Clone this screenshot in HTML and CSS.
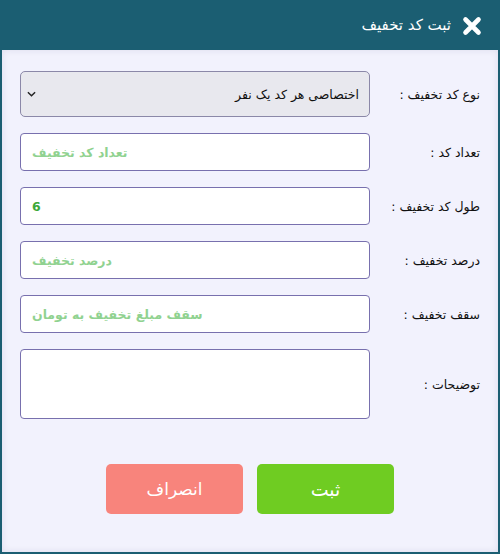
FILE: index.html
```html
<!DOCTYPE html>
<html lang="fa" dir="rtl">
<head>
<meta charset="utf-8">
<title>ثبت کد تخفیف</title>
<link rel="stylesheet" href="styles.css">
</head>
<body>
<div class="dialog">
  <header class="dialog-head">
    <svg class="close-icon" viewBox="0 0 20 20" width="20" height="20" aria-hidden="true">
      <path d="M3.5 3.5 L16.5 16.5 M16.5 3.5 L3.5 16.5" stroke="#fff" stroke-width="4.6" stroke-linecap="round" fill="none"/>
    </svg>
    <h1 class="dialog-title">ثبت کد تخفیف</h1>
  </header>
  <main class="dialog-body">
    <form class="form">
      <div class="row row-select">
        <label class="label">نوع کد تخفیف :</label>
        <div class="select-wrap">
          <select class="select">
            <option>اختصاصی هر کد یک نفر</option>
          </select>
          <svg class="chev" viewBox="0 0 10 6" width="9" height="6" aria-hidden="true">
            <path d="M1 1 L5 5 L9 1" stroke="#222" stroke-width="1.6" fill="none"/>
          </svg>
        </div>
      </div>
      <div class="row">
        <label class="label">تعداد کد :</label>
        <input class="field" type="text" placeholder="تعداد کد تخفیف">
      </div>
      <div class="row">
        <label class="label">طول کد تخفیف :</label>
        <input class="field field-val" type="text" value="6">
      </div>
      <div class="row">
        <label class="label">درصد تخفیف :</label>
        <input class="field" type="text" placeholder="درصد تخفیف">
      </div>
      <div class="row">
        <label class="label">سقف تخفیف :</label>
        <input class="field" type="text" placeholder="سقف مبلغ تخفیف به تومان">
      </div>
      <div class="row row-area">
        <label class="label">توضیحات :</label>
        <textarea class="area"></textarea>
      </div>
      <div class="actions">
        <button type="button" class="btn btn-ok">ثبت</button>
        <button type="button" class="btn btn-cancel">انصراف</button>
      </div>
    </form>
  </main>
</div>
</body>
</html>
```
FILE: styles.css
```css
html, body {
  margin: 0;
  padding: 0;
}
body {
  width: 500px;
  height: 554px;
  font-family: "DejaVu Sans", "Noto Sans", sans-serif;
  background: #1b5e72;
}
.dialog {
  width: 500px;
  height: 554px;
  display: flex;
  flex-direction: column;
  box-sizing: border-box;
}
.dialog-head {
  height: 50px;
  flex: none;
  background: #1b5e72;
  display: flex;
  align-items: center;
  padding-right: 18px;
  gap: 11px;
}
.close-icon {
  display: block;
  margin-top: 2px;
}
.dialog-title {
  margin: 0;
  color: #fff;
  font-size: 15px;
  font-weight: normal;
  line-height: 1;
}
.dialog-body {
  flex: 1;
  margin: 0 2px 2px 2px;
  background: #f2f2fd;
  box-shadow: inset 0 0 7px rgba(40, 40, 90, 0.10);
  padding: 21px 18px 0 18px;
}
.form {
  display: flex;
  flex-direction: column;
}
.row {
  display: flex;
  align-items: center;
  justify-content: space-between;
  height: 38px;
  margin-bottom: 16px;
}
.row-select {
  height: 46px;
  margin-bottom: 16px;
}
.row-area {
  height: 70px;
  margin-bottom: 45px;
}
.label {
  font-size: 12.5px;
  color: #111;
  white-space: nowrap;
}
.select-wrap {
  position: relative;
  width: 350px;
  height: 46px;
}
.select {
  appearance: none;
  -webkit-appearance: none;
  width: 100%;
  height: 100%;
  box-sizing: border-box;
  border: 1px solid #8b88a8;
  border-radius: 5px;
  background: #e8e8ee;
  font-family: inherit;
  font-size: 12.5px;
  color: #111;
  padding: 0 10px 0 30px;
  direction: rtl;
  margin: 0;
}
.chev {
  position: absolute;
  left: 7px;
  top: 20px;
}
.field {
  width: 350px;
  height: 38px;
  box-sizing: border-box;
  border: 1px solid #7870ae;
  border-radius: 4px;
  background: #fff;
  font-family: inherit;
  font-size: 12.5px;
  padding: 0 11px;
  direction: ltr;
  text-align: left;
  margin: 0;
  outline: none;
}
.field::placeholder {
  color: #90d290;
  font-weight: bold;
  opacity: 1;
}
.field-val {
  color: #3ea83a;
  font-weight: bold;
}
.area {
  width: 350px;
  height: 70px;
  box-sizing: border-box;
  border: 1px solid #7870ae;
  border-radius: 4px;
  background: #fff;
  resize: none;
  margin: 0;
  font-family: inherit;
}
.actions {
  display: flex;
  justify-content: center;
  gap: 14px;
}
.btn {
  width: 137px;
  height: 50px;
  border: none;
  border-radius: 5px;
  color: #fff;
  font-family: inherit;
  font-size: 17px;
  padding: 0;
  margin: 0;
}
.btn-ok {
  background: #6fcc22;
  font-size: 19px;
}
.btn-cancel {
  background: #f8847c;
}
```
